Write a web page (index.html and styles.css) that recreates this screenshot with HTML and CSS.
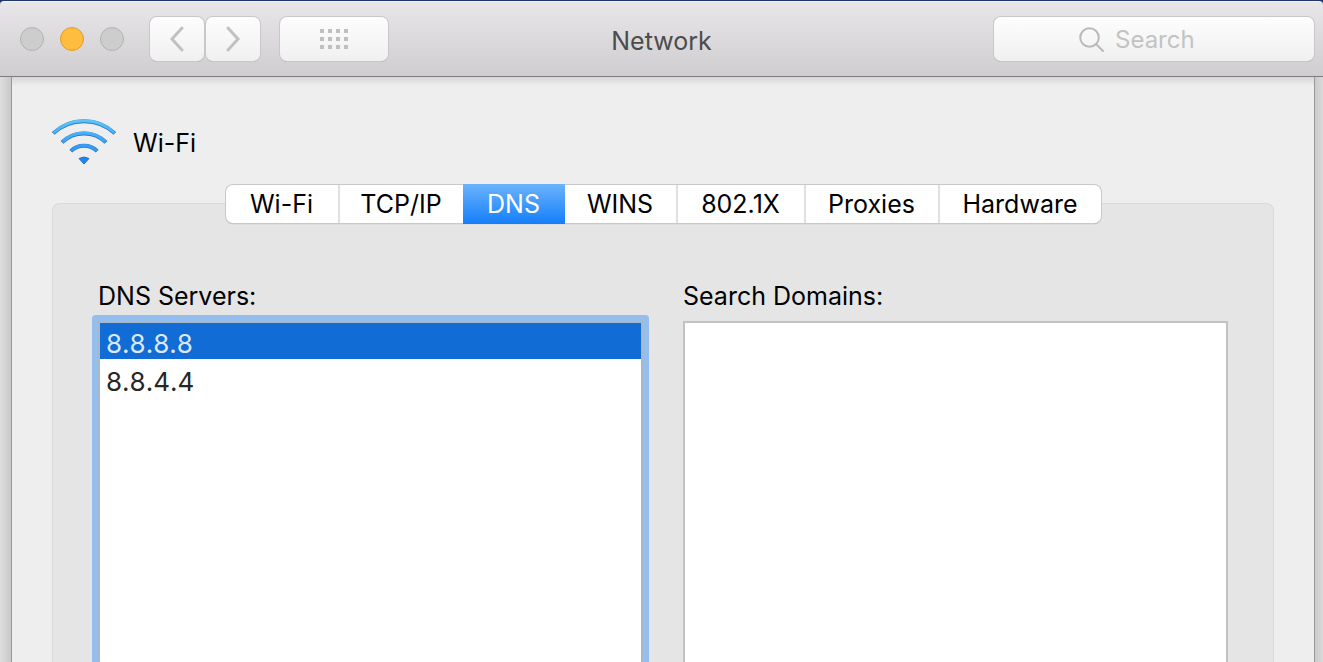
FILE: index.html
```html
<!DOCTYPE html>
<html lang="en">
<head>
<meta charset="utf-8">
<title>Network</title>
<link rel="stylesheet" href="styles.css">
</head>
<body>
<header class="titlebar">
  <div class="titlebar-left">
    <div class="lights">
      <button class="light" aria-label="Close"></button>
      <button class="light light-minimize" aria-label="Minimize"></button>
      <button class="light" aria-label="Zoom"></button>
    </div>
    <div class="history">
      <button class="tool" aria-label="Back"><svg width="16" height="26" viewBox="0 0 16 26"><path d="M13 2 3 13l10 11"/></svg></button>
      <button class="tool" aria-label="Forward"><svg width="16" height="26" viewBox="0 0 16 26"><path d="M3 2l10 11L3 24"/></svg></button>
    </div>
    <button class="tool tool-wide" aria-label="Show all">
      <svg class="dots" width="28" height="20" viewBox="0 0 28 20" shape-rendering="crispEdges"><path d="M0 0h4v4H0zM8 0h4v4H8zM16 0h4v4h-4zM24 0h4v4h-4zM0 8h4v4H0zM8 8h4v4H8zM16 8h4v4h-4zM24 8h4v4h-4zM0 16h4v4H0zM8 16h4v4H8zM16 16h4v4h-4zM24 16h4v4h-4z"/></svg>
    </button>
  </div>
  <h1 class="title">Network</h1>
  <label class="search">
    <svg width="26" height="26" viewBox="0 0 26 26"><circle cx="10.5" cy="11.5" r="9.3"/><path d="M17 18l7 7"/></svg>
    <input class="search-input" type="text" placeholder="Search" aria-label="Search">
  </label>
</header>
<main class="backdrop">
  <section class="sheet">
    <div class="service">
      <svg class="wifi" width="66" height="48" viewBox="0 0 66 48" aria-hidden="true">
        <defs>
          <linearGradient id="wave" gradientUnits="userSpaceOnUse" x1="0" y1="0" x2="0" y2="48">
            <stop offset="0" stop-color="#5cc8fb"/>
            <stop offset="1" stop-color="#1a7ff8"/>
          </linearGradient>
        </defs>
        <g fill="none" stroke="#2f78bd" stroke-width="4">
          <path d="M2.200 15.400C19-.9 47-.9 63.800 15.400"/>
          <path d="M11 24.300C23 12.400 43 12.400 55 24.300"/>
          <path d="M19.800 33.200C27 26 39 26 46.200 33.200"/>
        </g>
        <g fill="none" stroke="url(#wave)" stroke-width="3">
          <path d="M2.600 15C19-1.300 47-1.300 63.400 15"/>
          <path d="M11.500 23.900C23.200 12.100 42.800 12.100 54.500 23.900"/>
          <path d="M20.300 32.800C27.200 25.700 38.800 25.700 45.700 32.800"/>
        </g>
        <path d="M28 40.500Q33 37.500 38 40.500L33 46z" fill="#1f86f5" stroke="#2170c4" stroke-linejoin="round"/>
      </svg>
      <h2 class="service-name">Wi-Fi</h2>
    </div>
    <div class="tabs" role="tablist">
      <button class="tab" role="tab">Wi-Fi</button>
      <button class="tab" role="tab">TCP/IP</button>
      <button class="tab tab-selected" role="tab" aria-selected="true">DNS</button>
      <button class="tab" role="tab">WINS</button>
      <button class="tab" role="tab">802.1X</button>
      <button class="tab" role="tab">Proxies</button>
      <button class="tab" role="tab">Hardware</button>
    </div>
    <div class="panel" role="tabpanel">
      <div class="field">
        <h3 class="field-label" id="servers">DNS Servers:</h3>
        <ul class="list list-focused" role="listbox" aria-labelledby="servers">
          <li class="row row-selected" role="option" aria-selected="true">8.8.8.8</li>
          <li class="row" role="option">8.8.4.4</li>
        </ul>
      </div>
      <div class="field">
        <h3 class="field-label" id="domains">Search Domains:</h3>
        <ul class="list" role="listbox" aria-labelledby="domains"></ul>
      </div>
    </div>
  </section>
</main>
</body>
</html>
```
FILE: styles.css
```css
* {
  box-sizing: border-box;
}

body {
  margin: 0;
  height: 100vh;
  overflow: hidden;
  display: flex;
  flex-direction: column;
  background: #1f3768;
  color: #000;
  font: 25px/32px Inter, "Liberation Sans", sans-serif;
}

button,
input {
  font: inherit;
  color: inherit;
}

h1,
h2,
h3,
ul {
  margin: 0;
  padding: 0;
  font: inherit;
  list-style: none;
}

.titlebar {
  display: grid;
  grid-template-columns: 1fr auto 1fr;
  align-items: center;
  height: 76px;
  margin-top: 1px;
  padding: 0 8px;
  border-top: 1px solid #f6f4f6;
  border-bottom: 1px solid #7e7c7e;
  border-radius: 4px 4px 0 0;
  background: linear-gradient(#e9e6e9, #d0cdd0);
}

.titlebar-left {
  display: flex;
  align-items: center;
}

.lights {
  display: flex;
  gap: 16px;
  margin-left: 12px;
}

.light {
  width: 24px;
  height: 24px;
  padding: 0;
  border: 1px solid #b3b1b3;
  border-radius: 50%;
  background: #cecdce;
}

.light-minimize {
  border-color: #e09c2e;
  background: #ffbd3f;
}

.history {
  display: flex;
  gap: 2px;
  margin: 0 20px 0 26px;
}

.tool,
.search {
  height: 44px;
  border: 0;
  border-radius: 7px;
  background: linear-gradient(#fdfdfd, #f0f0f0);
  box-shadow: 0 0 0 1px #c9c7c9, 0 1px 0 0 #a09ea0;
}

.tool {
  display: flex;
  align-items: center;
  justify-content: center;
  width: 54px;
  padding: 0;
}

.tool svg,
.search svg {
  fill: none;
  stroke: #c1c1c1;
  stroke-width: 3;
  stroke-linecap: round;
}

.tool-wide {
  width: 108px;
}

.tool .dots {
  fill: #bfbfbf;
  stroke: none;
}

.title {
  color: #4c4c4c;
  padding-top: 4px;
}

.search {
  display: flex;
  align-items: center;
  justify-content: center;
  gap: 10px;
  justify-self: end;
  width: 320px;
  margin-right: 1px;
}

.search svg {
  stroke-width: 2;
  stroke: #b9b9b9;
}

.search-input {
  width: 114px;
  padding: 2px 0 0;
  border: 0;
  outline: 0;
  background: none;
  font-size: 24px;
}

.search-input::placeholder {
  color: #c3c3c3;
  opacity: 1;
}

.backdrop {
  flex: 1;
  min-height: 0;
  display: flex;
  padding: 0 8px 0 11px;
  background: linear-gradient(90deg, #dedede, #c8c8c8 11px, #c8c8c8 calc(100% - 9px), #dadada);
}

.sheet {
  flex: 1;
  display: flex;
  flex-direction: column;
  padding: 38px 40px 0;
  border: solid #999;
  border-width: 0 1px;
  background: linear-gradient(#d6d6d6, #eee 9px);
}

.service {
  display: flex;
  align-items: center;
  gap: 16px;
  height: 54px;
}

.wifi {
  margin-left: -1px;
}

.service-name {
  padding-top: 2px;
}

.tabs {
  z-index: 1;
  align-self: center;
  display: grid;
  grid-template-columns: 112fr 125fr 102fr 111fr 128fr 134fr 163fr;
  width: 100%;
  max-width: 875px;
  height: 38px;
  margin: 16px 0 -20px;
  border-radius: 7px;
  background: #fff;
  box-shadow: 0 0 0 1px #c9c9c9, 0 1px 1px 0 #999;
}

.tab {
  padding: 0;
  border: 0;
  border-left: 2px solid #e0e0e0;
  background: none;
}

.tab:first-child,
.tab-selected,
.tab-selected + .tab {
  border-left: 0;
}

.tab-selected {
  margin: -1px 0;
  color: #fff;
  background: linear-gradient(#6cb3fa, #147efb);
}

.panel {
  flex: 1;
  display: grid;
  grid-template-columns: 1fr 1fr;
  gap: 40px;
  padding: 76px 45px 0;
  border: 1px solid #dadada;
  border-bottom: 0;
  border-radius: 8px 8px 0 0;
  background: #e5e5e5;
}

.field {
  display: flex;
  flex-direction: column;
}

.field-label {
  margin-bottom: 9px;
}

.list {
  flex: 1;
  border: solid #c2c2c2;
  border-width: 2px 2px 0;
  background: #fff;
}

.list-focused {
  border-color: #a8b8c8;
  box-shadow: 0 0 0 6px #93beee;
  border-radius: 1px;
}

.row {
  height: 38px;
  padding: 5px 6px 0;
  color: #262626;
  font-size: 26px;
  font-kerning: none;
}

.row-selected {
  height: 36px;
  color: #dce9f9;
  background: #116cd6;
}

.row-selected + .row {
  padding-top: 7px;
}
```
